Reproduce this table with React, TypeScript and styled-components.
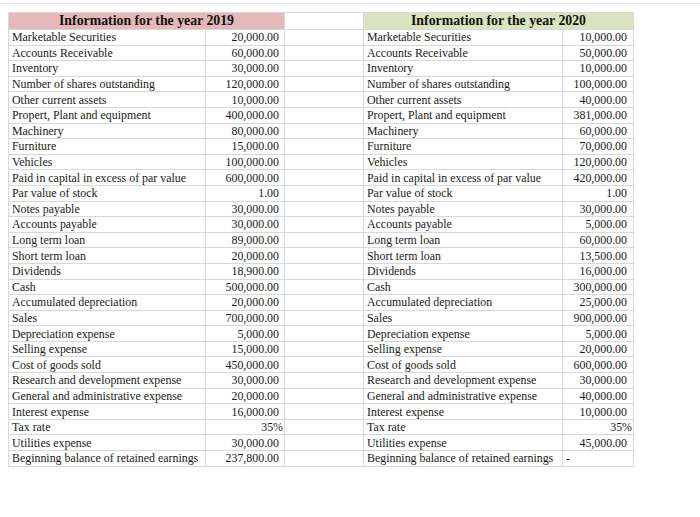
import React from 'react';
import styled, { createGlobalStyle } from 'styled-components';

const GlobalStyle = createGlobalStyle`
  html, body {
    margin: 0;
    padding: 0;
    background: #ffffff;
  }
  body {
    font-family: "Liberation Serif", "Times New Roman", serif;
    color: #1a1a1a;
  }
`;

const Page = styled.div`
  width: 700px;
  height: 517px;
  padding-top: 3px;
  box-sizing: border-box;
`;

const TopRule = styled.div`
  height: 1px;
  background: #e2e2e2;
`;

const Sheet = styled.table`
  margin: 8px 0 0 8px;
  border-collapse: collapse;
  table-layout: fixed;
  font-size: 11.9px;
  line-height: 14px;
`;

const HeaderCell = styled.th<{ $fill: string }>`
  height: 16px;
  padding: 0;
  background: ${p => p.$fill};
  border: 1px solid #d5d8e0;
  font-size: 13.8px;
  font-weight: 700;
  text-align: center;
  line-height: 16px;
  color: #111111;
`;

const BlankHead = styled.th`
  padding: 0;
  border: 1px solid #d5d8e0;
  background: #ffffff;
`;

const Row = styled.tr`
  height: 15.6px;
`;

const Label = styled.td`
  padding: 0 0 0 3px;
  border: 1px solid #d5d8e0;
  white-space: nowrap;
  overflow: hidden;
`;

const Value = styled.td<{ $pad: number; $align?: string }>`
  padding: 0 ${p => p.$pad}px 0 3px;
  border: 1px solid #d5d8e0;
  text-align: ${p => p.$align || 'right'};
  white-space: nowrap;
`;

const Gap = styled.td`
  padding: 0;
  border: 1px solid #d5d8e0;
`;

const labels = [
  'Marketable Securities',
  'Accounts Receivable',
  'Inventory',
  'Number of shares outstanding',
  'Other current assets',
  'Propert, Plant and equipment',
  'Machinery',
  'Furniture',
  'Vehicles',
  'Paid in capital in excess of par value',
  'Par value of stock',
  'Notes payable',
  'Accounts payable',
  'Long term loan',
  'Short term loan',
  'Dividends',
  'Cash',
  'Accumulated depreciation',
  'Sales',
  'Depreciation expense',
  'Selling expense',
  'Cost of goods sold',
  'Research and development expense',
  'General and administrative expense',
  'Interest expense',
  'Tax rate',
  'Utilities expense',
  'Beginning balance of retained earnings',
];

const year2019 = [
  '20,000.00', '60,000.00', '30,000.00', '120,000.00', '10,000.00', '400,000.00',
  '80,000.00', '15,000.00', '100,000.00', '600,000.00', '1.00', '30,000.00',
  '30,000.00', '89,000.00', '20,000.00', '18,900.00', '500,000.00', '20,000.00',
  '700,000.00', '5,000.00', '15,000.00', '450,000.00', '30,000.00', '20,000.00',
  '16,000.00', '35%', '30,000.00', '237,800.00',
];

const year2020 = [
  '10,000.00', '50,000.00', '10,000.00', '100,000.00', '40,000.00', '381,000.00',
  '60,000.00', '70,000.00', '120,000.00', '420,000.00', '1.00', '30,000.00',
  '5,000.00', '60,000.00', '13,500.00', '16,000.00', '300,000.00', '25,000.00',
  '900,000.00', '5,000.00', '20,000.00', '600,000.00', '30,000.00', '40,000.00',
  '10,000.00', '35%', '45,000.00', '-',
];

const cellProps = (v: string, pad: number) => {
  if (v === '-') return { $pad: 0, $align: 'left' };
  if (v.endsWith('%')) return { $pad: 1 };
  return { $pad: pad };
};

const App: React.FC = () => (
  <>
    <GlobalStyle />
    <Page>
      <TopRule />
      <Sheet>
        <colgroup>
          <col style={{ width: 197 }} />
          <col style={{ width: 79 }} />
          <col style={{ width: 79 }} />
          <col style={{ width: 199 }} />
          <col style={{ width: 71 }} />
        </colgroup>
        <thead>
          <tr>
            <HeaderCell colSpan={2} $fill="#e6b9b8">Information for the year 2019</HeaderCell>
            <BlankHead />
            <HeaderCell colSpan={2} $fill="#d8e4bd">Information for the year 2020</HeaderCell>
          </tr>
        </thead>
        <tbody>
          {labels.map((label, i) => (
            <Row key={label}>
              <Label>{label}</Label>
              <Value {...cellProps(year2019[i], 5)}>{year2019[i]}</Value>
              <Gap />
              <Label>{label}</Label>
              <Value {...cellProps(year2020[i], 6)}>{year2020[i]}</Value>
            </Row>
          ))}
        </tbody>
      </Sheet>
    </Page>
  </>
);

export default App;
